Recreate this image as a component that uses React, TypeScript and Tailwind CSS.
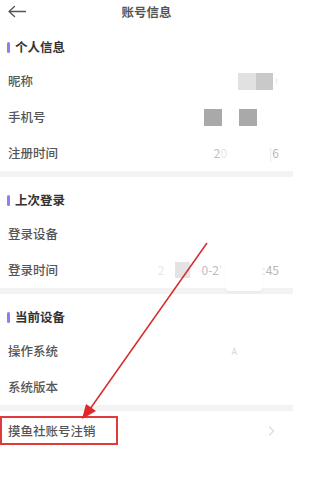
import type { ReactNode } from 'react'

const font = { fontFamily: '"Noto Sans CJK SC", "Noto Sans", sans-serif' }

function SectionTitle({ title }: { title: string }) {
  return (
    <div className="flex h-[39px] items-center gap-[5px] pl-[7px] pt-[7px]">
      <span className="h-[11px] w-[3px] rounded-full bg-[#8c7ff0]" />
      <span className="text-[12.5px] font-bold leading-none text-[#333]">{title}</span>
    </div>
  )
}

function Row({ label, children, className = 'h-[36px]' }: { label: string; children?: ReactNode; className?: string }) {
  return (
    <div className={`relative flex items-center justify-between pl-[8px] pr-[14px] ${className}`}>
      <span className="text-[12.5px] font-medium leading-none text-[#555]">{label}</span>
      <div className="flex items-center text-[12px] leading-none text-[#b5b5b5]">{children}</div>
    </div>
  )
}

function Divider() {
  return <div className="h-[6px] bg-[#f3f3f3]" />
}

export default function App() {
  return (
    <div className="relative h-[500px] w-[293px] overflow-hidden bg-white" style={font}>
      {/* nav */}
      <div className="relative flex h-[24px] items-center justify-center">
        <svg className="absolute left-[8px] top-[5px]" width="18" height="14" viewBox="0 0 18 14" fill="none">
          <path d="M1 6.5H17.5M6.5 1.5L1 6.5L6.5 11.5" stroke="#555" strokeWidth="1.3" strokeLinecap="round" strokeLinejoin="round" />
        </svg>
        <span className="text-[12.5px] font-bold leading-none text-[#555]">账号信息</span>
      </div>

      <SectionTitle title="个人信息" />
      <Row label="昵称">
        <span className="h-[17px] w-[18px] bg-[#e1e1e1]" />
        <span className="h-[17px] w-[17px] bg-[#c9c9c9]" />
        <span className="ml-[2px] w-[4px] text-[9px] text-[#e3e3e3]">!</span>
      </Row>
      <Row label="手机号">
        <span className="h-[17px] w-[18px] bg-[#a9a9a9]" />
        <span className="ml-[17px] h-[17px] w-[18px] bg-[#a9a9a9]" />
        <span className="w-[22px]" />
      </Row>
      <Row label="注册时间">
        <span className="text-[#c0c0c0]">2</span>
        <span className="text-[#e6e6e6]">0</span>
        <span className="w-[42px]" />
        <span className="text-[#e6e6e6]">|</span>
        <span className="text-[#b8b8b8]">6</span>
      </Row>
      <Divider />

      <SectionTitle title="上次登录" />
      <Row label="登录设备" />
      <Row label="登录时间">
        <span className="text-[#e8e8e8]">2</span>
        <span className="ml-[10px] h-[16px] w-[15px] bg-[#e3e3e3]" />
        <span className="ml-[12px] text-[#bdbdbd]">0-2</span>
        <span className="text-[#e6e6e6]">'</span>
        <span className="relative ml-[4px] h-[12px] w-[36px]">
          <span className="absolute left-0 top-[-7px] h-[34px] w-[36px] rounded-[3px] bg-white shadow-[0_2px_3px_rgba(0,0,0,0.04)]" />
        </span>
        <span className="text-[#e3e3e3]">:</span>
        <span className="text-[#b5b5b5]">45</span>
      </Row>
      <Divider />

      <SectionTitle title="当前设备" />
      <Row label="操作系统">
        <span className="mr-[42px] text-[9px] text-[#d5d5d5]">A</span>
      </Row>
      <Row label="系统版本" />
      <Divider />

      <Row label="摸鱼社账号注销" className="h-[40px]">
        <svg width="7" height="10" viewBox="0 0 7 10" fill="none" className="mr-[4px]">
          <path d="M1.5 1L5.5 5L1.5 9" stroke="#dcdcdc" strokeWidth="1.2" strokeLinecap="round" strokeLinejoin="round" />
        </svg>
        <span className="pointer-events-none absolute left-0 top-[5px] h-[29px] w-[118px] border-2 border-[#e03a3a]" />
      </Row>

      {/* annotation arrow */}
      <svg className="pointer-events-none absolute left-0 top-0" width="293" height="500" viewBox="0 0 293 500">
        <line x1="207" y1="243" x2="90" y2="409" stroke="#d42c2c" strokeWidth="1.5" />
        <polygon points="82,419 96,411 86,404" fill="#e02828" />
      </svg>
    </div>
  )
}
